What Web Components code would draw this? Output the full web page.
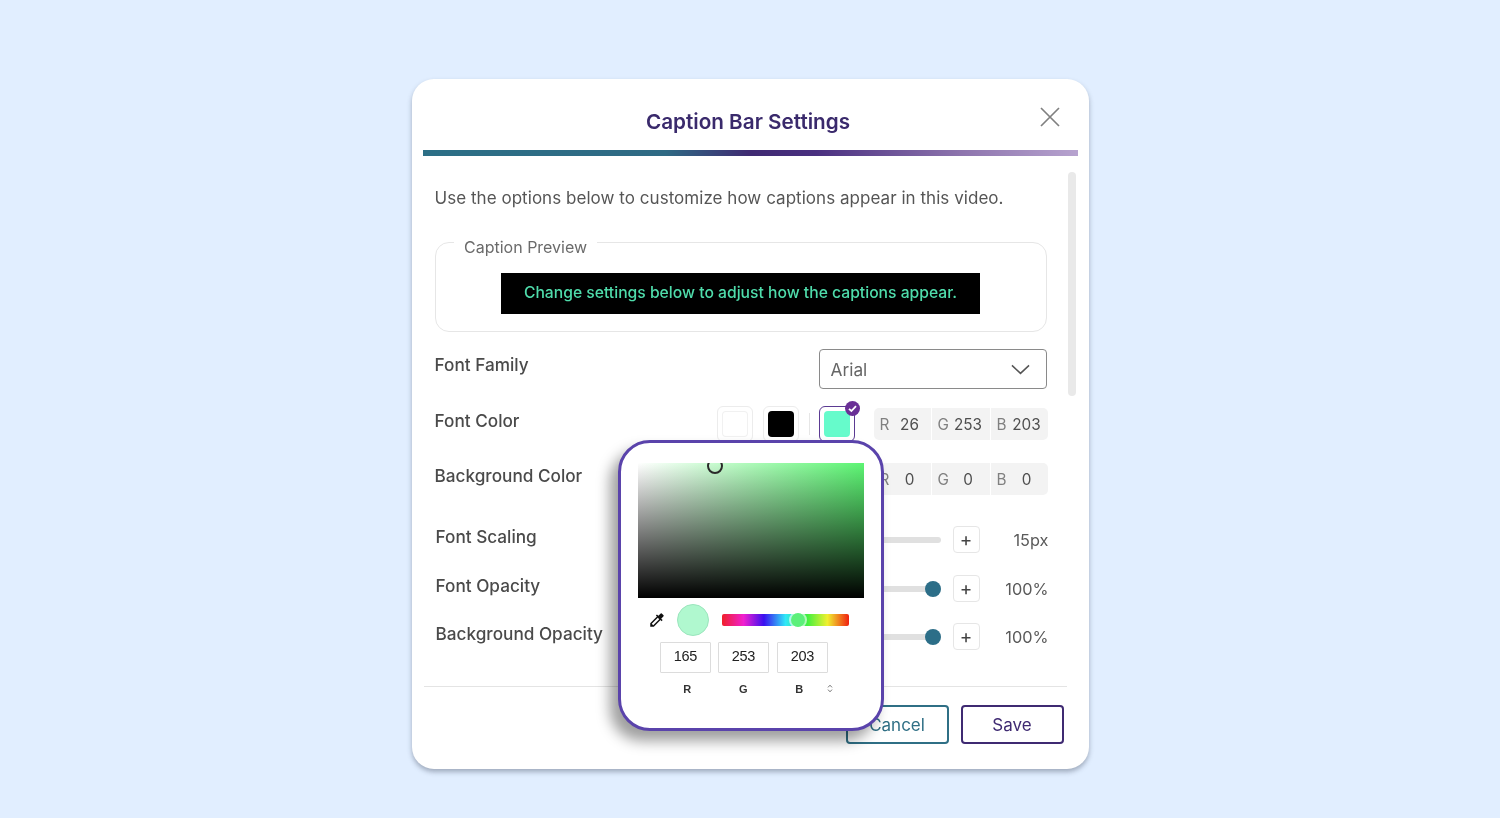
<!DOCTYPE html>
<html lang="en"><head><meta charset="utf-8"><title>Caption Bar Settings</title>
<style>
html,body{margin:0;height:818px;overflow:hidden;background:#e1eeff}
body{font-family:Inter,"Liberation Sans",sans-serif;display:flex;justify-content:center;align-items:flex-start;padding-top:79px;box-sizing:border-box}
</style></head><body>
<caption-dialog heading="Caption Bar Settings">
  <p>Use the options below to customize how captions appear in this video.</p>
  <caption-preview>Change settings below to adjust how the captions appear.</caption-preview>
  <select-row label="Font Family" value="Arial"></select-row>
  <color-row label="Font Color" r="26" g="253" b="203" selected style="margin-top:17px"></color-row>
  <color-row label="Background Color" r="0" g="0" b="0" style="margin-top:19px"></color-row>
  <slider-row label="Font Scaling" value="15px" fill="20" style="margin-top:29px"></slider-row>
  <slider-row label="Font Opacity" value="100%" fill="100" style="margin-top:22px"></slider-row>
  <slider-row label="Background Opacity" value="100%" fill="100" style="margin-top:21px"></slider-row>
  <action-button slot="footer" tone="teal">Cancel</action-button>
  <action-button slot="footer" tone="purple">Save</action-button>
  <picker-popup slot="overlay" r="165" g="253" b="203"></picker-popup>
</caption-dialog>
<script>
const shadow=(el,html)=>{el.attachShadow({mode:'open'}).innerHTML=html};
const FONT='Inter,"Liberation Sans",sans-serif';
customElements.define('caption-dialog',class extends HTMLElement{connectedCallback(){shadow(this,`<style>
:host{display:flex;flex-direction:column;position:relative;width:677px;height:690px;background:#fff;border-radius:22px;box-shadow:0 3px 5px rgba(60,70,90,.4);font-family:${FONT};color:#4c4c4c;filter:blur(.3px)}
header{display:grid;grid-template-columns:1fr auto 1fr;align-items:start;height:71px;padding:0 16px 0 12px;box-sizing:border-box}
h1{grid-column:2;margin:27.5px 0 0;font-size:20.7px;line-height:30px;font-weight:600;color:#3a2a6c;white-space:nowrap}
.close{grid-column:3;justify-self:end;margin:27px 12px 0 0;width:22px;height:22px;display:block}
.bar{height:6px;margin:0 11px;background:linear-gradient(90deg,#2c6f86 0%,#2f6a84 37%,#3f2a72 50%,#4a3080 60%,#8d74ad 82%,#b7a3cf 100%)}
.body{flex:1;display:flex;min-height:0}
.content{flex:1;min-width:0;padding:30px 0 0 22px;box-sizing:border-box}
.rail{width:8px;height:224px;margin:16px 13px 0 20px;border-radius:4px;background:#e9e9e9}
::slotted(p){margin:0;padding-left:1px;font-size:17px;line-height:24px;color:#555;letter-spacing:.04px}
.foot{margin:0 22px 0 12px;border-top:1px solid #e4e4e4;height:83px;box-sizing:border-box;padding:18px 3px 0 0;display:flex;justify-content:flex-end;align-items:flex-start;gap:12px}
</style>
<header><h1>${this.getAttribute('heading')}</h1>
<svg class="close" viewBox="0 0 22 22" fill="none" stroke="#808080" stroke-width="1.7"><path d="M2 2 20 20M20 2 2 20"/></svg></header>
<div class="bar"></div>
<div class="body"><div class="content"><slot></slot></div><div class="rail"></div></div>
<div class="foot"><slot name="footer"></slot></div>
<slot name="overlay"></slot>`)}});
customElements.define('caption-preview',class extends HTMLElement{connectedCallback(){shadow(this,`<style>
:host{display:block;width:612px;margin:16px 0 0 1px}
fieldset{margin:0;padding:15px 66px 17px 65px;border:1px solid #e6e6e6;border-radius:14px;box-sizing:border-box;min-width:0}
legend{margin-left:-46.5px;padding:10px 10px 0;font-size:16px;line-height:22px;color:#6b6b6b}
.cap{height:41px;padding:0 0 2px 1px;box-sizing:border-box;background:#000;color:#4fdcab;font-size:15.7px;font-weight:500;display:flex;align-items:center;justify-content:center;white-space:nowrap}
</style><fieldset><legend>Caption Preview</legend><div class="cap"><slot></slot></div></fieldset>`)}});
customElements.define('select-row',class extends HTMLElement{connectedCallback(){shadow(this,`<style>
:host{display:flex;align-items:center;justify-content:space-between;width:613px;margin-top:17px}
.l{font-size:17.2px;font-weight:500;color:#4a4a4a;padding:0 0 9px 1px}
.s{width:228px;height:40px;box-sizing:border-box;border:1.5px solid #8a8a8a;border-radius:4px;display:flex;align-items:center;justify-content:space-between;padding:0 16px 0 11px;font-size:17.3px;color:#666}
svg{display:block}
</style><span class="l">${this.getAttribute('label')}</span>
<div class="s"><span>${this.getAttribute('value')}</span><svg width="19" height="11" viewBox="0 0 20 11" fill="none" stroke="#555" stroke-width="1.6"><path d="M1 1.2 10 9.6 19 1.2"/></svg></div>`)}});
customElements.define('color-swatch',class extends HTMLElement{connectedCallback(){const sel=this.hasAttribute('selected');shadow(this,`<style>
:host{display:block;position:relative;width:36px;height:36px;box-sizing:border-box;border:1.5px solid ${sel?'#5b3a92':'#ececec'};border-radius:6px;padding:4px}
i{display:block;width:100%;height:100%;border-radius:4px;background:${this.getAttribute('color')};${this.getAttribute('color')==='#fff'?'box-shadow:inset 0 0 0 1px #f1f1f1':''}}
svg{position:absolute;right:-6px;top:-6px}
</style><i></i>${sel?'<svg width="15" height="15" viewBox="0 0 15 15"><circle cx="7.5" cy="7.5" r="7.5" fill="#6a2f96"/><path d="M4 7.8 6.4 10 11 5.2" fill="none" stroke="#fff" stroke-width="1.8"/></svg>':''}`)}});
customElements.define('rgb-chip',class extends HTMLElement{connectedCallback(){shadow(this,`<style>
:host{display:flex;flex:none;align-items:center;box-sizing:border-box;width:${this.getAttribute('w')}px;height:32px;background:#f3f3f3;padding:0 6px;font-size:15.3px;color:#4f4f4f}
b{font-weight:400;color:#808080;width:15px;flex:none}
span{flex:1;text-align:center}
</style><b>${this.getAttribute('k')}</b><span>${this.getAttribute('v')}</span>`)}});
customElements.define('color-row',class extends HTMLElement{connectedCallback(){const sel=this.hasAttribute('selected');const[r,g,b]=['r','g','b'].map(k=>this.getAttribute(k));shadow(this,`<style>
:host{display:flex;align-items:center;width:614px}
.l{font-size:17.2px;font-weight:500;color:#4a4a4a;flex:1;padding:0 0 8px 1px}
.sw{display:flex;align-items:center;gap:10px;margin-right:19px}
.d{width:1px;height:22px;background:#e6e6e6;margin-right:-1px}
.chips{display:flex;gap:1px;border-radius:5px;overflow:hidden;width:174px}
</style><span class="l">${this.getAttribute('label')}</span>
<div class="sw"><color-swatch color="#fff"></color-swatch><color-swatch color="#000"></color-swatch><span class="d"></span><color-swatch color="${sel?'#66fbcb':'#000'}" ${sel?'selected':''}></color-swatch></div>
<div class="chips"><rgb-chip w="57" k="R" v="${r}"></rgb-chip><rgb-chip w="58" k="G" v="${g}"></rgb-chip><rgb-chip w="57" k="B" v="${b}"></rgb-chip></div>`)}});
customElements.define('slider-row',class extends HTMLElement{connectedCallback(){const f=+this.getAttribute('fill');shadow(this,`<style>
:host{display:flex;align-items:center;width:614px;margin-left:1px}
.l{font-size:17.2px;font-weight:500;color:#4a4a4a;flex:1;padding:0 0 6px 1px}
.b{width:27px;height:27px;box-sizing:border-box;border:1px solid #e6e6e6;border-radius:4px;display:flex;align-items:center;justify-content:center;font-size:19px;line-height:1;color:#444}
.t{position:relative;width:250px;height:6px;border-radius:3px;background:#e0e0e0;margin:0 12px}
.t i{position:absolute;left:${f}%;top:50%;width:16px;height:16px;margin:-8px 0 0 -16px;border-radius:50%;background:#2c6e88}
.v{width:69px;text-align:right;font-size:16.3px;color:#5a5a5a;padding-top:1px}
</style><span class="l">${this.getAttribute('label')}</span><span class="b">&minus;</span><div class="t"><i></i></div><span class="b">+</span><span class="v">${this.getAttribute('value')}</span>`)}});
customElements.define('action-button',class extends HTMLElement{connectedCallback(){const teal=this.getAttribute('tone')==='teal';shadow(this,`<style>
:host{display:flex;align-items:center;justify-content:center;width:103px;height:39px;box-sizing:border-box;border:2px solid ${teal?'#2f6f85':'#3f2a72'};border-radius:4px;font-size:17px;color:${teal?'#2f6f85':'#3f2a72'}}
</style><slot></slot>`)}});
customElements.define('picker-popup',class extends HTMLElement{connectedCallback(){const[r,g,b]=['r','g','b'].map(k=>this.getAttribute(k));shadow(this,`<style>
:host{position:absolute;left:206px;top:360.5px;width:266px;height:291px;box-sizing:border-box;border:3.5px solid #5a43ab;border-radius:32px;background:#fff;box-shadow:-8px 10px 14px rgba(0,0,0,.38);padding:20px 17px 0 17.3px;font-family:"Liberation Sans",Arial,sans-serif;color:#222}
.sv{position:relative;height:135px;overflow:hidden;background:linear-gradient(180deg,rgba(0,0,0,0),#000),linear-gradient(90deg,#fff,#5cf573)}
.sv i{position:absolute;left:69px;top:-5px;width:12px;height:12px;border:2px solid #2a2a2a;border-radius:50%}
.tools{display:flex;align-items:center;margin-top:5px;height:34px}
.drop{margin-left:10.5px;width:18px;height:18px}
.cur{width:30px;height:30px;border-radius:50%;background:#b0f8cf;border:1px solid #9be5bd;margin-left:11px}
.hue{position:relative;width:127px;height:12px;margin-left:13px;border-radius:2px;background:linear-gradient(90deg,#f0202a 0%,#f020d0 17%,#3a10f0 33%,#30e8f8 50%,#40f040 67%,#f0f030 83%,#f02010 100%)}
.hue i{position:absolute;left:69px;top:-1px;width:14px;height:14px;border-radius:50%;background:#5cf07a;box-shadow:0 0 0 2px rgba(255,255,255,.6)}
.inp{display:flex;gap:7px;margin:5.5px 0 0 22px}
.inp span{width:51px;height:31px;padding-bottom:3px;box-sizing:border-box;border:1px solid #dcdcdc;display:flex;align-items:center;justify-content:center;font-size:14.5px;letter-spacing:-.4px;border-radius:1px}
.inp span+span+span{margin-left:1px}
.lab{display:flex;align-items:center;margin:9px 0 0 21.5px;font-size:11px;font-weight:700;height:13px;color:#333}
.lab b{width:56px;text-align:center;font-weight:700}
svg{display:block}
</style><div class="sv"><i></i></div>
<div class="tools"><svg class="drop" viewBox="0 0 24 24"><path fill="#111" d="M20.71 5.63l-2.34-2.34a.9959.9959 0 0 0-1.41 0l-3.12 3.12-1.93-1.91-1.41 1.41 1.42 1.42L3 16.25V21h4.75l8.92-8.92 1.42 1.42 1.41-1.41-1.92-1.92 3.12-3.12c.4-.4.4-1.03.01-1.42zM6.92 19L5 17.08l8.06-8.06 1.92 1.92L6.92 19z"/></svg><div class="cur"></div><div class="hue"><i></i></div></div>
<div class="inp"><span>${r}</span><span>${g}</span><span>${b}</span></div>
<div class="lab"><b>R</b><b>G</b><b>B</b><svg width="6" height="9" viewBox="0 0 6 9" fill="none" stroke="#777" stroke-width="1"><path d="M1 3.4 3 1.2 5 3.4M1 5.6 3 7.8 5 5.6"/></svg></div>`)}});
</script></body></html>
